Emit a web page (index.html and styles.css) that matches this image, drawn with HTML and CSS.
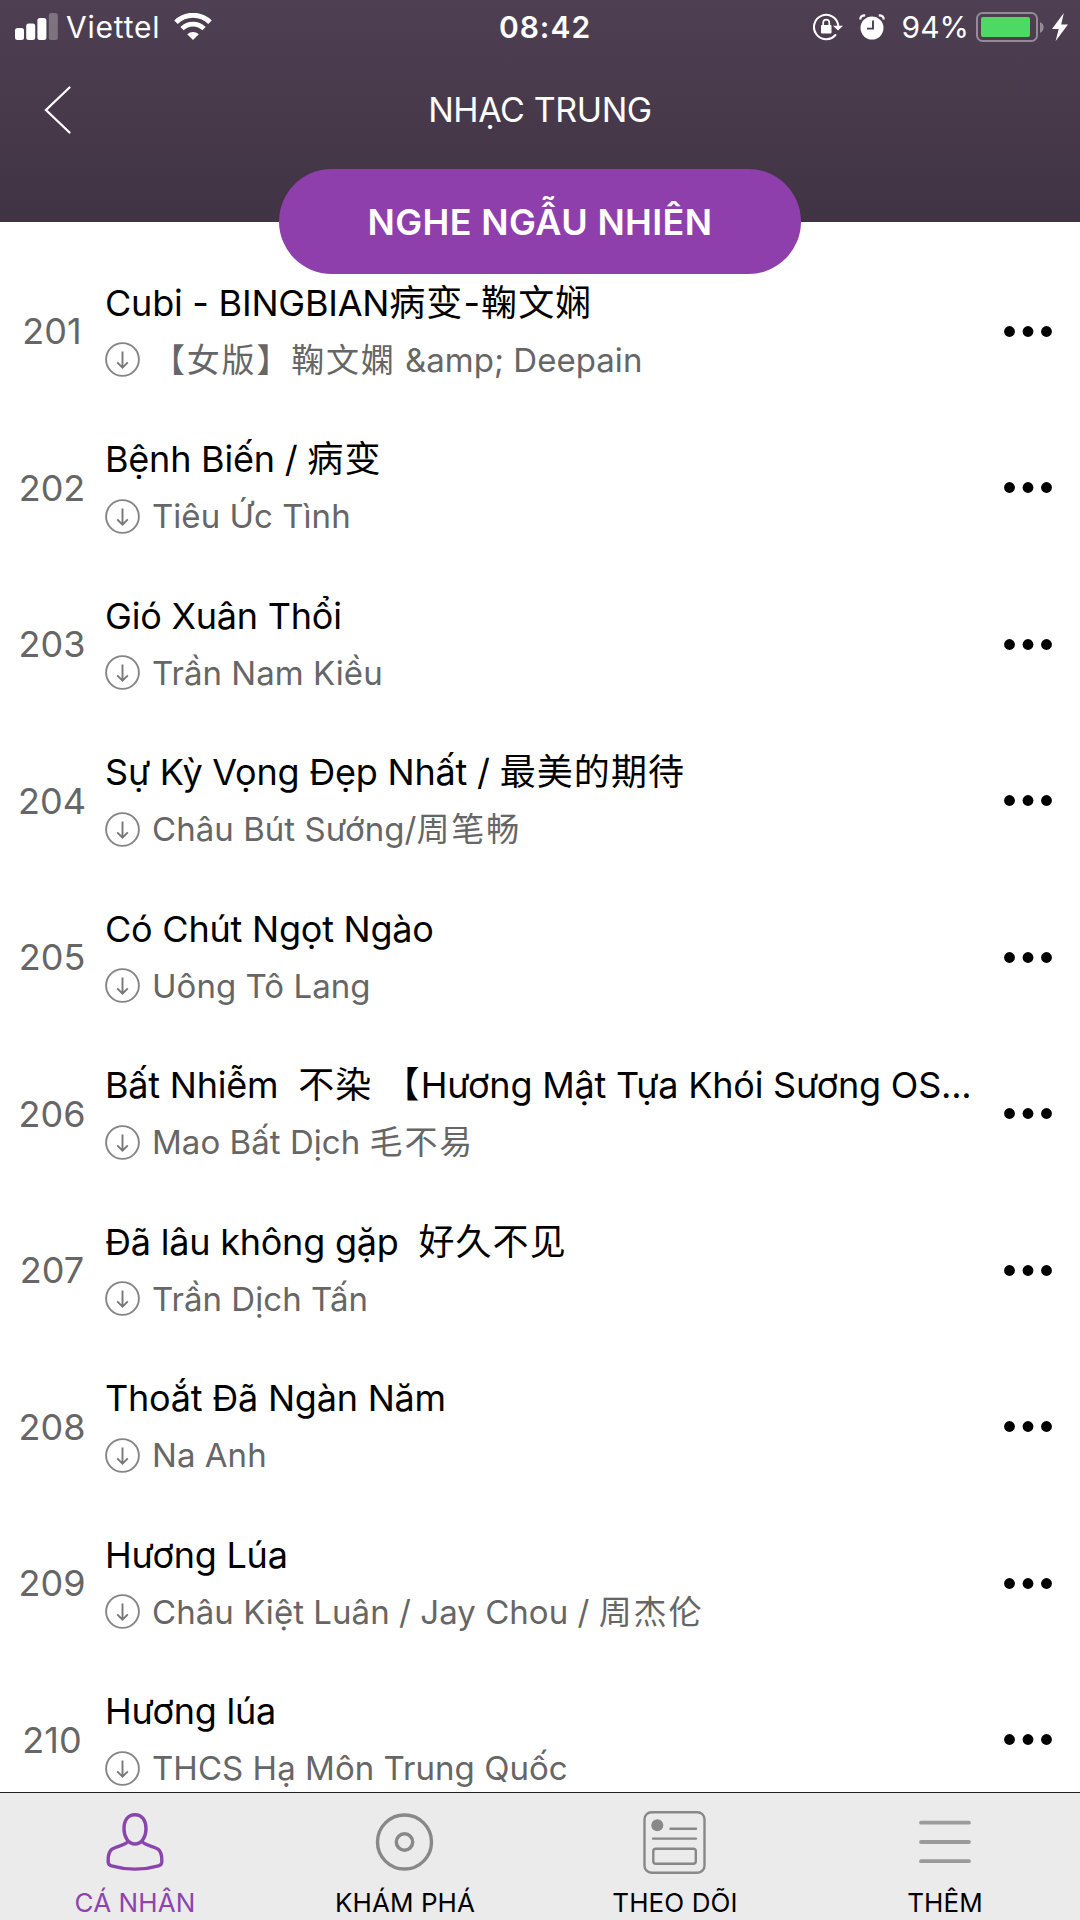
FILE: index.html
```html
<!DOCTYPE html>
<html lang="vi">
<head>
  <meta charset="UTF-8" />
  <meta name="viewport" content="width=device-width, initial-scale=1.0"/>
  <title>Nhạc Trung</title>
  <link rel="stylesheet" href="styles.css">
</head>
<body>

  <svg class="defs" width="0" height="0">
    <symbol id="download" viewBox="0 0 35 35">
      <circle cx="17.5" cy="17.5" r="16.4" fill="none" stroke="#858585" stroke-width="1.9"/>
      <path d="M17.5 9.5V25.5M12.2 20.4L17.5 25.6L22.8 20.4" fill="none" stroke="#777" stroke-width="1.9"/>
    </symbol>
    <symbol id="dots" viewBox="0 0 48 11">
      <circle cx="5.5" cy="5.5" r="5.4"/>
      <circle cx="24" cy="5.5" r="5.4"/>
      <circle cx="42.5" cy="5.5" r="5.4"/>
    </symbol>
  </svg>

  <header>
    <div class="status-bar">
      <div class="status-left">
        <svg class="signal" width="43" height="28" viewBox="0 0 43 28" fill="#fff">
          <rect x="0" y="15" width="9" height="12" rx="2.5"/>
          <rect x="11.2" y="10.5" width="9" height="16.5" rx="2.5"/>
          <rect x="22.4" y="5" width="9" height="22" rx="2.5"/>
          <rect x="33.8" y="0" width="9" height="27" rx="2.5" opacity=".28"/>
        </svg>
        <span class="carrier">Viettel</span>
        <svg class="wifi" width="38" height="28" viewBox="0 0 38 28">
          <g fill="none" stroke="#fff" stroke-width="5">
            <path d="M2 9.2A24.3 24.3 0 0 1 36 9.2"/>
            <path d="M8 15.7A15.5 15.5 0 0 1 30 15.7" stroke-width="4.6"/>
          </g>
          <path d="M19 27L13.2 21.3A8.5 8.5 0 0 1 24.8 21.3Z" fill="#fff"/>
        </svg>
      </div>
      <div class="time">08:42</div>
      <div class="status-right">
        <svg class="lock" width="31" height="28" viewBox="0 0 31 28">
          <path d="M25.3 12.5A12.2 12.2 0 1 0 22.4 22" fill="none" stroke="#fff" stroke-width="2.1" stroke-linecap="round"/>
          <path d="M20 12.8H30L25 17.5Z" fill="#fff"/>
          <rect x="8" y="12" width="10.5" height="8.5" rx="1" fill="#fff"/>
          <path d="M10.2 12.5V9.6A3 3 0 0 1 16.3 9.6V12.5" fill="none" stroke="#fff" stroke-width="1.7"/>
        </svg>
        <svg class="alarm" width="26" height="27" viewBox="0 0 26 27">
          <circle cx="13" cy="14" r="11.5" fill="#fff"/>
          <path d="M1.4 5.5Q1 1.2 6.2 1.3M24.6 5.5Q25 1.2 19.8 1.3" fill="none" stroke="#fff" stroke-width="2.2"/>
          <path d="M14 6.5V14.6H8" fill="none" stroke="#493c4e" stroke-width="1.9"/>
        </svg>
        <span class="percent">94%</span>
        <svg class="battery" width="68" height="30" viewBox="0 0 68 30">
          <rect x="1" y="1" width="60" height="28" rx="5.5" fill="none" stroke="#958b98" stroke-width="2"/>
          <rect x="5" y="5" width="49" height="20" rx="2" fill="#4cd964"/>
          <path d="M64 10Q67.6 11.5 67.6 15.3Q67.6 19.5 64 21Z" fill="#958b98"/>
        </svg>
        <svg class="bolt" width="16" height="28" viewBox="0 0 16 28">
          <path d="M11.8 0L0 16H6.7L3.6 28L16 11.5H9.2Z" fill="#fff"/>
        </svg>
      </div>
    </div>
    <div class="nav">
      <svg class="back" width="28" height="50" viewBox="0 0 28 50">
        <path d="M25.5 2.5L2 25L25.5 47.5" fill="none" stroke="#fff" stroke-width="2.3" stroke-linecap="round"/>
      </svg>
      <h1>NHẠC TRUNG</h1>
    </div>
    <button class="shuffle-btn">NGHE NGẪU NHIÊN</button>
  </header>

  <main>
    <ul class="songs">
      <li class="song">
        <span class="num">201</span>
        <div class="info">
          <p class="title">Cubi - BINGBIAN<span class="zh">病变-鞠文娴</span></p>
          <p class="artist"><svg><use href="#download"/></svg><span><span class="zh">【女版】鞠文嫻</span> &amp;amp; Deepain</span></p>
        </div>
        <svg class="more"><use href="#dots"/></svg>
      </li>
      <li class="song">
        <span class="num">202</span>
        <div class="info">
          <p class="title">Bệnh Biến / <span class="zh">病变</span></p>
          <p class="artist"><svg><use href="#download"/></svg><span>Tiêu Ức Tình</span></p>
        </div>
        <svg class="more"><use href="#dots"/></svg>
      </li>
      <li class="song">
        <span class="num">203</span>
        <div class="info">
          <p class="title">Gió Xuân Thổi</p>
          <p class="artist"><svg><use href="#download"/></svg><span>Trần Nam Kiều</span></p>
        </div>
        <svg class="more"><use href="#dots"/></svg>
      </li>
      <li class="song">
        <span class="num">204</span>
        <div class="info">
          <p class="title">Sự Kỳ Vọng Đẹp Nhất / <span class="zh">最美的期待</span></p>
          <p class="artist"><svg><use href="#download"/></svg><span>Châu Bút Sướng/<span class="zh">周笔畅</span></span></p>
        </div>
        <svg class="more"><use href="#dots"/></svg>
      </li>
      <li class="song">
        <span class="num">205</span>
        <div class="info">
          <p class="title">Có Chút Ngọt Ngào</p>
          <p class="artist"><svg><use href="#download"/></svg><span>Uông Tô Lang</span></p>
        </div>
        <svg class="more"><use href="#dots"/></svg>
      </li>
      <li class="song">
        <span class="num">206</span>
        <div class="info">
          <p class="title">Bất Nhiễm  <span class="zh">不染 【</span>Hương Mật Tựa Khói Sương OS...</p>
          <p class="artist"><svg><use href="#download"/></svg><span>Mao Bất Dịch <span class="zh">毛不易</span></span></p>
        </div>
        <svg class="more"><use href="#dots"/></svg>
      </li>
      <li class="song">
        <span class="num">207</span>
        <div class="info">
          <p class="title">Đã lâu không gặp  <span class="zh">好久不见</span></p>
          <p class="artist"><svg><use href="#download"/></svg><span>Trần Dịch Tấn</span></p>
        </div>
        <svg class="more"><use href="#dots"/></svg>
      </li>
      <li class="song">
        <span class="num">208</span>
        <div class="info">
          <p class="title">Thoắt Đã Ngàn Năm</p>
          <p class="artist"><svg><use href="#download"/></svg><span>Na Anh</span></p>
        </div>
        <svg class="more"><use href="#dots"/></svg>
      </li>
      <li class="song">
        <span class="num">209</span>
        <div class="info">
          <p class="title">Hương Lúa</p>
          <p class="artist"><svg><use href="#download"/></svg><span>Châu Kiệt Luân / Jay Chou / <span class="zh">周杰伦</span></span></p>
        </div>
        <svg class="more"><use href="#dots"/></svg>
      </li>
      <li class="song">
        <span class="num">210</span>
        <div class="info">
          <p class="title">Hương lúa</p>
          <p class="artist"><svg><use href="#download"/></svg><span>THCS Hạ Môn Trung Quốc</span></p>
        </div>
        <svg class="more"><use href="#dots"/></svg>
      </li>
    </ul>
  </main>

  <nav class="tabs">
    <a class="tab active">
      <svg width="64" height="64" viewBox="0 0 64 64" fill="none" stroke="#8a44ae" stroke-width="3.4" stroke-linejoin="round">
        <path d="M32 4.7C24.5 4.7 21 11 21 19C21 27 25.5 34 32 34C38.5 34 43 27 43 19C43 11 39.5 4.7 32 4.7Z"/>
        <path d="M25 31.5C22 35.5 12 36.5 8.5 39.5C5.5 42.5 5 49 5.3 52.5Q5.6 55 8.5 55.8Q32 62.5 55.5 55.8Q58.4 55 58.7 52.5C59 49 58.5 42.5 55.5 39.5C52 36.5 42 35.5 39 31.5"/>
      </svg>
      <span>CÁ NHÂN</span>
    </a>
    <a class="tab">
      <svg width="64" height="64" viewBox="0 0 64 64" fill="none" stroke="#888" stroke-width="3.4">
        <circle cx="31.5" cy="32" r="27"/>
        <circle cx="31.5" cy="32" r="8.2"/>
      </svg>
      <span>KHÁM PHÁ</span>
    </a>
    <a class="tab">
      <svg width="64" height="64" viewBox="0 0 64 64" fill="none" stroke="#888" stroke-width="2.4" stroke-linecap="round">
        <rect x="1.5" y="2.2" width="60" height="60.5" rx="7"/>
        <circle cx="14.3" cy="15.3" r="6" fill="#888" stroke="none"/>
        <path d="M27.5 18.8H53M10 28.6H53"/>
        <rect x="10.3" y="38.8" width="42.5" height="15" rx="2.5"/>
      </svg>
      <span>THEO DÕI</span>
    </a>
    <a class="tab">
      <svg width="64" height="64" viewBox="0 0 64 64" fill="none" stroke="#9b9b9b" stroke-width="3.8" stroke-linecap="round">
        <path d="M8 12.7H56M8 32H56M8 51.2H56"/>
      </svg>
      <span>THÊM</span>
    </a>
  </nav>

</body>
</html>
```
FILE: styles.css
```css
* { margin: 0; padding: 0; box-sizing: border-box; }

body {
  font-family: Inter, 'Noto Sans CJK SC', sans-serif;
  background: #fff;
  color: #000;
  display: flex;
  flex-direction: column;
  height: 1920px;
  overflow: hidden;
}

svg { display: block; flex: none; }

.defs { position: absolute; }

header {
  height: 222px;
  flex: none;
  display: flex;
  flex-direction: column;
  align-items: center;
  background: linear-gradient(#4e4052, #403344);
  color: #fff;
}

.status-bar {
  width: 100%;
  height: 54px;
  flex: none;
  display: grid;
  grid-template-columns: 1fr auto 1fr;
  align-items: center;
  padding: 0 12px 0 15px;
  font-size: 30px;
}

.status-left,
.status-right {
  display: flex;
  align-items: center;
}

.status-right { justify-content: flex-end; }

.carrier { margin: 0 14px 0 8px; letter-spacing: 0.8px; }

.time {
  margin-left: 7px;
  font-weight: 600;
  letter-spacing: 1px;
}

.alarm { margin: 0 17px 0 15px; }

.percent { margin-right: 7px; }

.battery { margin-right: 8px; }

.nav {
  width: 100%;
  height: 111px;
  margin-bottom: 4px;
  flex: none;
  display: grid;
  grid-template-columns: 1fr auto 1fr;
  align-items: center;
  padding: 0 44px;
}

.nav h1 {
  font-size: 34px;
  font-weight: 400;
  letter-spacing: -0.4px;
}

.shuffle-btn {
  width: 522px;
  height: 105px;
  flex: none;
  border: none;
  border-radius: 53px;
  background: #8e3fab;
  color: #fff;
  font-family: inherit;
  font-size: 36px;
  font-weight: 600;
  letter-spacing: 0.35px;
}

main {
  flex: 1;
  min-height: 0;
  overflow: hidden;
  padding-top: 31px;
}

.songs { list-style: none; }

.song {
  height: 156.52px;
  display: grid;
  grid-template-columns: 105px 1fr 48px;
  align-items: center;
  padding-right: 28px;
}

.num {
  color: #666;
  font-size: 36px;
  text-align: center;
  padding-right: 1px;
}

.info {
  min-width: 0;
  padding-top: 1px;
}

.title {
  font-size: 36px;
  line-height: 56px;
  letter-spacing: -0.22px;
  white-space: pre;
}

.artist {
  display: flex;
  align-items: center;
  gap: 12px;
  color: #666;
  font-size: 33px;
  line-height: 58px;
  letter-spacing: 0.04px;
  white-space: pre;
}

.title .zh { letter-spacing: 1.1px; }

.artist .zh { letter-spacing: 1.8px; }

.artist svg { width: 35px; height: 35px; }

.more { width: 48px; height: 11px; }

.tabs {
  height: 128px;
  flex: none;
  display: grid;
  grid-template-columns: repeat(4, 1fr);
  background: #ebebeb;
  border-top: 1px solid #222;
  padding-top: 17px;
}

.tab {
  display: flex;
  flex-direction: column;
  align-items: center;
  gap: 12px;
  font-size: 26px;
  line-height: 34px;
  letter-spacing: 0.1px;
}

.tab.active { color: #8e44ad; }
```
